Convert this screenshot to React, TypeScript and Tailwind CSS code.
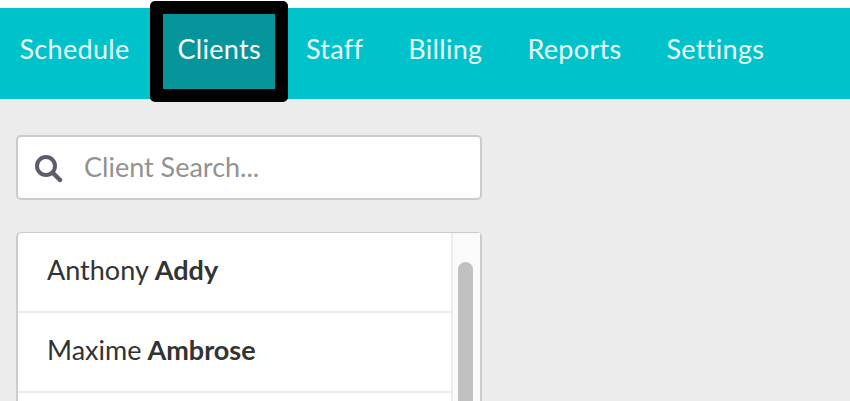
const navItems = ['Schedule', 'Clients', 'Staff', 'Billing', 'Reports', 'Settings']

const clients = [
  { first: 'Anthony', last: 'Addy' },
  { first: 'Maxime', last: 'Ambrose' },
  { first: '', last: '' },
]

export default function App() {
  return (
    <div className="h-[401px] w-[850px] overflow-hidden bg-white pt-2 font-['Lato',sans-serif]">
      {/* Top nav */}
      <nav className="flex h-[91px] items-center gap-4 bg-[#00c2cb] pb-1 pl-[5px]">
        {navItems.map((item) =>
          item === 'Clients' ? (
            <a key={item} className="relative flex h-[75px] items-center bg-[#07959c] px-[14.5px] pb-1 text-[27px] tracking-[0.3px] text-white">
              {item}
              <span className="absolute -inset-[13px] rounded-[5px] border-[13px] border-black" />
            </a>
          ) : (
            <a key={item} className="flex h-[75px] items-center px-[14.5px] pb-1 text-[27px] tracking-[0.3px] text-[#e9fafb] first:mr-[3px]">
              {item}
            </a>
          ),
        )}
      </nav>

      <main className="h-full bg-[#ececec] pl-4 pt-9">
        {/* Search */}
        <div className="flex h-[65px] w-[466px] items-center rounded-[5px] border-2 border-[#cbcbcb] bg-white pl-[17px]">
          <svg width="28" height="28" viewBox="0 0 28 28" fill="none" stroke="#5e5b6d" className="mt-[2px] shrink-0">
            <circle cx="11" cy="11" r="9" strokeWidth="4" />
            <line x1="18" y1="18" x2="25" y2="25" strokeWidth="4.5" strokeLinecap="round" />
          </svg>
          <span className="ml-[21px] text-[27px] text-[#929292]">Client Search...</span>
        </div>

        {/* Client list */}
        <div className="mt-8 flex w-[466px] rounded-t-[5px] border-x-2 border-t border-[#cbcbcb] bg-white">
          <ul className="flex-1">
            {clients.map((client, index) => (
              <li key={index} className="flex h-[80px] items-center border-b-2 border-[#ececec] pb-[3px] pl-[29px] text-[27px] text-[#333333]">
                {client.first} <b className="ml-[6px] font-bold">{client.last}</b>
              </li>
            ))}
          </ul>
          <div className="w-[29px] border-l-2 border-[#ececec] bg-[#fafafa] pl-[5px] pt-[29px]">
            <div className="h-[200px] w-[15px] rounded-t-full bg-[#c1c1c1]" />
          </div>
        </div>
      </main>
    </div>
  )
}
